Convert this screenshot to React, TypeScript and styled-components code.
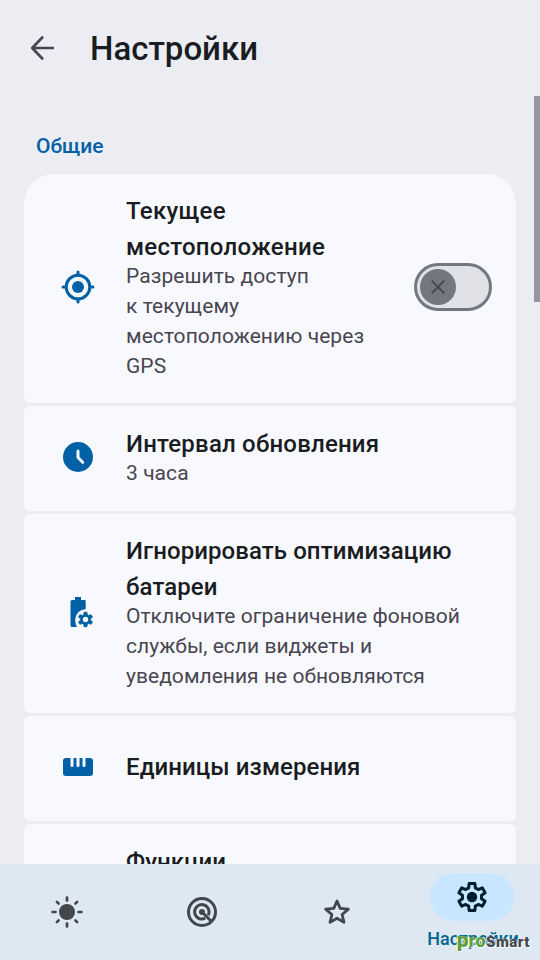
import React from "react";
import styled, { createGlobalStyle } from "styled-components";

const GlobalStyle = createGlobalStyle`
  * { box-sizing: border-box; }
  html, body { margin: 0; padding: 0; overflow: hidden; }
  body { font-family: Roboto, "Noto Sans", sans-serif; background: #ecedf3; }
`;

const Screen = styled.div`
  height: 960px;
  display: flex;
  flex-direction: column;
  overflow: hidden;
  background: #ecedf3;
  color: #191c20;
`;

const TopBar = styled.header`
  height: 96px;
  flex: none;
  display: flex;
  align-items: center;
  gap: 30px;
  padding-left: 24px;
`;

const BackButton = styled.button`
  display: flex;
  padding: 0;
  border: 0;
  background: none;
  color: #49454f;
`;

const PageTitle = styled.h1`
  margin: 2px 0 0;
  font-size: 33px;
  line-height: 42px;
  font-weight: 500;
`;

const Scroller = styled.main`
  flex: 1;
  min-height: 0;
  display: flex;
  overflow: hidden;
`;

const Content = styled.div`
  flex: 1;
  padding: 35px 18px 0 24px;
`;

const ScrollThumb = styled.div`
  width: 6px;
  height: 206px;
  background: #96949f;
`;

const SectionTitle = styled.h2`
  margin: 0 0 13px 12px;
  font-size: 21px;
  line-height: 30px;
  font-weight: 500;
  color: #0061a6;
`;

const CardList = styled.div`
  display: flex;
  flex-direction: column;
  gap: 3px;
`;

const Card = styled.section<{ $height: number; $first?: boolean }>`
  height: ${(p) => p.$height}px;
  flex: none;
  display: flex;
  align-items: center;
  padding: 0 24px 0 36px;
  border-radius: ${(p) => (p.$first ? "30px 30px 6px 6px" : "6px")};
  background: #f8f9ff;
`;

const CardIcon = styled.div`
  flex: none;
  width: 36px;
  height: 36px;
  margin: 0 30px 3px 0;
  color: #0061a6;
  svg { display: block; }
`;

const CardText = styled.div`
  flex: 1;
  margin-bottom: 3px;
`;

const CardTitle = styled.h3<{ $track?: number }>`
  margin: 0;
  font-size: 24px;
  line-height: 36px;
  font-weight: 500;
  letter-spacing: ${(p) => p.$track ?? 0.225}px;
`;

const FeatureTitle = styled(CardTitle)`
  padding-left: 66px;
`;

const CardNote = styled.p<{ $track?: number }>`
  margin: -4px 0 0;
  font-size: 21px;
  line-height: 30px;
  letter-spacing: ${(p) => p.$track ?? 0.06}px;
  color: #49454f;
`;

const Toggle = styled.button`
  flex: none;
  width: 78px;
  height: 48px;
  margin: 0 0 3px 24px;
  padding: 0 3px;
  display: flex;
  align-items: center;
  border: 3px solid #73777f;
  border-radius: 24px;
  background: #e1e2e8;
`;

const Knob = styled.span`
  width: 36px;
  height: 36px;
  display: grid;
  place-items: center;
  border-radius: 50%;
  background: #73777f;
  color: #49454f;
`;

const BottomNav = styled.nav`
  flex: none;
  height: 96px;
  display: grid;
  grid-template-columns: repeat(4, 1fr);
  background: #dee8f2;
`;

const NavItem = styled.div<{ $active?: boolean }>`
  position: relative;
  display: flex;
  flex-direction: column;
  align-items: center;
  justify-content: ${(p) => (p.$active ? "flex-start" : "center")};
  padding-top: ${(p) => (p.$active ? 9 : 0)}px;
  padding-right: 1px;
  color: #42474e;
`;

const ActivePill = styled.div`
  width: 84px;
  height: 48px;
  display: grid;
  place-items: center;
  border-radius: 24px;
  background: #c8e6ff;
  color: #001e2f;
`;

const NavLabel = styled.span`
  margin: 6px 0 0 2px;
  font-size: 18px;
  line-height: 24px;
  font-weight: 500;
  color: #00658e;
`;

const Watermark = styled.div`
  position: absolute;
  right: 10px;
  top: 65px;
  font: 900 15px/22px Roboto, sans-serif;
  color: #44494d;
  letter-spacing: 0.5px;
  text-shadow: 1px 1px 1px #fff, -1px 0 1px #fff;
`;

const WatermarkAccent = styled.span`
  font-size: 18px;
  letter-spacing: 0.3px;
  color: #5f9f3c;
`;

const WatermarkInitial = styled.span`
  font-size: 21px;
`;

/* Closed gear outline with six teeth around (cx, cy). */
function gearPath(cx: number, cy: number, tip: number, base: number, tipDeg: number, baseDeg: number) {
  const points: string[] = [];
  for (let k = 0; k < 6; k++) {
    const spec: [number, number][] = [[base, -baseDeg], [tip, -tipDeg], [tip, tipDeg], [base, baseDeg]];
    for (const [r, d] of spec) {
      const a = ((k * 60 - 90 + d) * Math.PI) / 180;
      points.push(`${(cx + r * Math.cos(a)).toFixed(2)} ${(cy + r * Math.sin(a)).toFixed(2)}`);
    }
  }
  return `M${points.join("L")}Z`;
}

const BackIcon = () => (
  <svg width="36" height="36" viewBox="0 0 36 36" fill="none" stroke="currentColor" strokeWidth="2.7">
    <path d="M30 18H9M19 6.8 8.2 18 19 29.2" strokeLinejoin="round" />
  </svg>
);

const LocationIcon = () => (
  <svg width="36" height="36" viewBox="0 0 36 36" fill="none" stroke="currentColor" strokeWidth="3">
    <circle cx="18" cy="18" r="11.8" />
    <circle cx="18" cy="18" r="6" fill="currentColor" stroke="none" />
    <path d="M18 3v2.5M18 30.5V33M3 18h2.5M30.5 18H33" strokeLinecap="round" />
  </svg>
);

const ClockIcon = () => (
  <svg width="36" height="36" viewBox="0 0 36 36">
    <circle cx="18" cy="18" r="15" fill="currentColor" />
    <path d="M18 12v6.5l4.7 4.8" fill="none" stroke="#f8f9ff" strokeWidth="3" strokeLinecap="round" />
  </svg>
);

const BatteryIcon = () => (
  <svg width="36" height="36" viewBox="0 0 36 36" fill="currentColor">
    <path d="M15 3h6v3h3.500q1.200 0 1.200 1.200v7.800Q15.500 16.500 15.200 25.500q0 4.500 1.800 7.500H12q-1.500 0-1.500-1.500V7.500Q10.500 6 12 6h3Z" />
    <path d={gearPath(25.5, 25.5, 7.4, 5, 11, 22)} stroke="currentColor" strokeWidth="0.8" strokeLinejoin="round" />
    <circle cx="25.5" cy="25.5" r="2.7" fill="#f8f9ff" />
  </svg>
);

const RulerIcon = () => (
  <svg width="36" height="36" viewBox="0 0 36 36">
    <rect x="3" y="9" width="30" height="18" rx="3" fill="currentColor" />
    <path d="M12 9v7.5M18 9v7.5M24 9v7.5" stroke="#f8f9ff" strokeWidth="3" strokeLinecap="round" />
  </svg>
);

const SunIcon = () => (
  <svg width="36" height="36" viewBox="0 0 36 36" stroke="currentColor" strokeWidth="2.7" strokeLinecap="round">
    <circle cx="18" cy="18" r="8" fill="currentColor" stroke="none" />
    <path d="M18 3.5v3M18 29.5v3M3.5 18h3M29.5 18h3M7.9 7.9l1.7 1.7M26.4 26.4l1.7 1.7M7.9 28.1l1.7-1.7M26.4 9.6l1.7-1.7" />
  </svg>
);

const RadarIcon = () => (
  <svg width="36" height="36" viewBox="0 0 36 36" fill="none" stroke="currentColor" strokeWidth="3">
    <circle cx="18" cy="18" r="13.5" />
    <path d="M21.2 24.2a7.2 7.2 0 1 1 3-3" />
    <circle cx="18" cy="18" r="3" fill="currentColor" stroke="none" />
    <path d="m18 18 9 9" />
  </svg>
);

const StarIcon = () => (
  <svg width="36" height="36" viewBox="0 0 36 36" fill="none" stroke="currentColor" strokeWidth="2.8" strokeLinejoin="round">
    <path d="M18 7 21.2 14.4 29.4 15.1 23.1 20.5 25 28.4 18 24.2 11 28.4 12.900 20.500 6.600 15.100 14.800 14.400Z" />
  </svg>
);

const GearIcon = () => (
  <svg width="36" height="36" viewBox="0 0 36 36">
    <path
      d={gearPath(18, 18, 13.8, 9.7, 12, 20)}
      fill="none"
      stroke="currentColor"
      strokeWidth="3"
      strokeLinejoin="round"
    />
    <circle cx="18" cy="18" r="5.2" fill="currentColor" />
  </svg>
);

export default function App() {
  return (
    <>
      <GlobalStyle />
      <Screen>
        <TopBar>
          <BackButton aria-label="Назад"><BackIcon /></BackButton>
          <PageTitle>Настройки</PageTitle>
        </TopBar>
        <Scroller>
          <Content>
            <SectionTitle>Общие</SectionTitle>
            <CardList>
              <Card $height={229} $first>
                <CardIcon><LocationIcon /></CardIcon>
                <CardText>
                  <CardTitle $track={0.27}>Текущее местоположение</CardTitle>
                  <CardNote>Разрешить доступ<br />к текущему местоположению через GPS</CardNote>
                </CardText>
                <Toggle role="switch" aria-checked="false">
                  <Knob>
                    <svg width="14" height="14" viewBox="0 0 14 14" stroke="currentColor" strokeWidth="1.8">
                      <path d="M.7.7 13.3 13.3M13.3.7.7 13.3" />
                    </svg>
                  </Knob>
                </Toggle>
              </Card>
              <Card $height={105}>
                <CardIcon><ClockIcon /></CardIcon>
                <CardText>
                  <CardTitle $track={0.2}>Интервал обновления</CardTitle>
                  <CardNote>3 часа</CardNote>
                </CardText>
              </Card>
              <Card $height={199}>
                <CardIcon><BatteryIcon /></CardIcon>
                <CardText>
                  <CardTitle $track={0.08}>Игнорировать оптимизацию батареи</CardTitle>
                  <CardNote $track={0.03}>Отключите ограничение фоновой службы, если виджеты и уведомления не обновляются</CardNote>
                </CardText>
              </Card>
              <Card $height={105}>
                <CardIcon><RulerIcon /></CardIcon>
                <CardText><CardTitle $track={0.08}>Единицы измерения</CardTitle></CardText>
              </Card>
              <Card $height={79}>
                <CardText>
                  <FeatureTitle $track={0.05}>Функции</FeatureTitle>
                </CardText>
              </Card>
            </CardList>
          </Content>
          <ScrollThumb />
        </Scroller>
        <BottomNav>
          <NavItem><SunIcon /></NavItem>
          <NavItem><RadarIcon /></NavItem>
          <NavItem><StarIcon /></NavItem>
          <NavItem $active>
            <ActivePill><GearIcon /></ActivePill>
            <NavLabel>Настройки</NavLabel>
            <Watermark>
              <WatermarkAccent><WatermarkInitial>p</WatermarkInitial>ro</WatermarkAccent>Smart
            </Watermark>
          </NavItem>
        </BottomNav>
      </Screen>
    </>
  );
}
